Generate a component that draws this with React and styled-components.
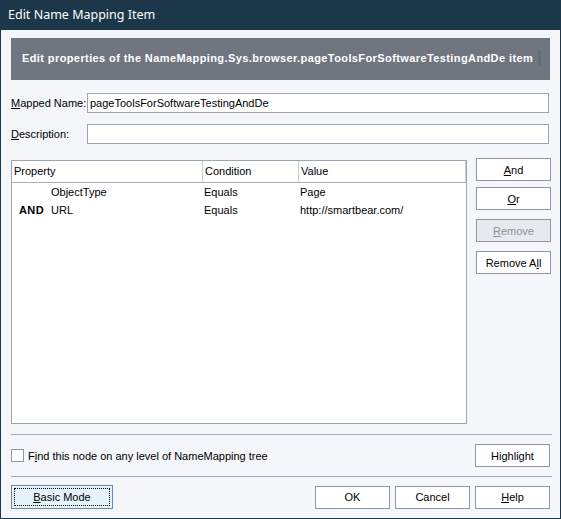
import React from 'react';
import styled, { createGlobalStyle } from 'styled-components';

const GlobalStyle = createGlobalStyle`
    html, body {
        margin: 0;
        padding: 0;
        background: #f4f6f9;
    }
    body {
        font-family: 'Liberation Sans', Arial, sans-serif;
        font-size: 11px;
        color: #000;
    }
`;

const rows = [
    { op: '', property: 'ObjectType', condition: 'Equals', value: 'Page' },
    { op: 'AND', property: 'URL', condition: 'Equals', value: 'http://smartbear.com/' },
];

const App = () => {
    return (
        <Window>
            <GlobalStyle />
            <TitleBar>Edit Name Mapping Item</TitleBar>
            <Body>
                <Banner>
                    <span>Edit properties of the NameMapping.Sys.browser.pageToolsForSoftwareTestingAndDe item</span>
                    <BannerNub />
                </Banner>

                <FieldRow>
                    <Label><u>M</u>apped Name:</Label>
                    <TextInput readOnly value="pageToolsForSoftwareTestingAndDe" />
                </FieldRow>
                <FieldRow gap={11}>
                    <Label><u>D</u>escription:</Label>
                    <TextInput readOnly value="" />
                </FieldRow>

                <MainArea>
                    <Grid>
                        <HeaderRow>
                            <HeadCell width={191}>Property</HeadCell>
                            <HeadCell width={96}>Condition</HeadCell>
                            <HeadCell grow>Value</HeadCell>
                        </HeaderRow>
                        <RowList>
                            {rows.map((r) => (
                                <DataRow key={r.property}>
                                    <OpCell>{r.op}</OpCell>
                                    <Cell width={153}>{r.property}</Cell>
                                    <Cell width={96}>{r.condition}</Cell>
                                    <Cell grow>{r.value}</Cell>
                                </DataRow>
                            ))}
                        </RowList>
                    </Grid>
                    <SideButtons>
                        <Button tight><u>A</u>nd</Button>
                        <Button><u>O</u>r</Button>
                        <Button disabled><u>R</u>emove</Button>
                        <Button>Remove A<u>l</u>l</Button>
                    </SideButtons>
                </MainArea>

                <Separator top={10} />

                <OptionRow>
                    <CheckLabel>
                        <CheckBox />
                        <span>F<u>i</u>nd this node on any level of NameMapping tree</span>
                    </CheckLabel>
                    <Button>Hi<u>g</u>hlight</Button>
                </OptionRow>

                <Separator top={9} />

                <FooterRow>
                    <ModeButton><FocusRing><u>B</u>asic Mode</FocusRing></ModeButton>
                    <FooterButtons>
                        <Button>OK</Button>
                        <Button>Cancel</Button>
                        <Button><u>H</u>elp</Button>
                    </FooterButtons>
                </FooterRow>
            </Body>
        </Window>
    );
};

export default App;

const Window = styled.div`
    width: 561px;
    height: 519px;
    box-sizing: border-box;
    border: 1px solid #1b3749;
    border-top: none;
    background: #f4f6f9;
    display: flex;
    flex-direction: column;
    overflow: hidden;
`;

const TitleBar = styled.div`
    height: 30px;
    flex: none;
    margin: 0 -1px;
    background: #1b3749;
    color: #fff;
    font-family: 'Noto Sans', 'Open Sans', sans-serif;
    font-size: 12.5px;
    line-height: 30px;
    padding-left: 8px;
`;

const Body = styled.div`
    padding: 8px 9px 0 10px;
    display: flex;
    flex-direction: column;
`;

const Banner = styled.div`
    height: 42px;
    width: 539px;
    box-sizing: border-box;
    background: #6f7680;
    color: #fff;
    font-weight: bold;
    font-size: 11px;
    letter-spacing: 0.4px;
    display: flex;
    align-items: center;
    justify-content: space-between;
    padding: 0 9px 2px 11px;
    white-space: nowrap;
`;

const BannerNub = styled.div`
    width: 3px;
    height: 14px;
    background: #656b75;
`;

const FieldRow = styled.div`
    display: flex;
    align-items: center;
    height: 20px;
    margin-top: ${(p) => p.gap || 13}px;
`;

const Label = styled.label`
    width: 76px;
    flex: none;
`;

const TextInput = styled.input`
    width: 462px;
    height: 20px;
    box-sizing: border-box;
    border: 1px solid #9aa5b5;
    background: #fff;
    font-family: inherit;
    font-size: 11px;
    padding: 0 2px;
    outline: none;
`;

const MainArea = styled.div`
    display: flex;
    align-items: flex-start;
    gap: 9px;
    margin-top: 14px;
`;

const Grid = styled.div`
    margin-top: 2px;
    width: 456px;
    height: 264px;
    box-sizing: border-box;
    border: 1px solid #9aa5b5;
    background: #fff;
`;

const HeaderRow = styled.div`
    display: flex;
    height: 22px;
    border: 1px solid #c7ccd3;
    border-top: none;
    border-left: none;
    box-sizing: border-box;
    border-bottom-color: #a8afb9;
`;

const HeadCell = styled.div`
    width: ${(p) => (p.width ? `${p.width}px` : 'auto')};
    flex: ${(p) => (p.grow ? 1 : 'none')};
    box-sizing: border-box;
    padding-left: 2px;
    line-height: 21px;
    border-right: ${(p) => (p.grow ? 'none' : '1px solid #c7ccd3')};
`;

const RowList = styled.div`
    display: flex;
    flex-direction: column;
`;

const DataRow = styled.div`
    display: flex;
    height: 18px;
    align-items: center;
`;

const OpCell = styled.div`
    width: 38px;
    flex: none;
    box-sizing: border-box;
    padding-left: 7px;
    font-weight: bold;
    font-size: 11px;
    letter-spacing: 0.4px;
`;

const Cell = styled.div`
    width: ${(p) => (p.width ? `${p.width}px` : 'auto')};
    flex: ${(p) => (p.grow ? 1 : 'none')};
    box-sizing: border-box;
    padding-left: 1px;
    white-space: nowrap;
`;

const SideButtons = styled.div`
    display: flex;
    flex-direction: column;
    gap: 9px;
`;

const Button = styled.button`
    width: 75px;
    height: 23px;
    box-sizing: border-box;
    border: 1px solid #8c98a9;
    background: ${(p) => (p.disabled ? '#e6e9ed' : '#fff')};
    color: ${(p) => (p.disabled ? '#8d939c' : '#000')};
    font-family: inherit;
    font-size: 11px;
    padding: 0;
    margin-bottom: ${(p) => (p.tight ? '-3px' : '0')};
    cursor: default;
`;

const Separator = styled.div`
    height: 1px;
    width: 541px;
    background: #a3abb6;
    margin-top: ${(p) => p.top}px;
`;

const OptionRow = styled.div`
    display: flex;
    align-items: center;
    justify-content: space-between;
    margin-top: 9px;
    width: 539px;
`;

const CheckLabel = styled.label`
    display: flex;
    align-items: center;
    gap: 4px;
`;

const CheckBox = styled.span`
    width: 13px;
    height: 13px;
    box-sizing: border-box;
    border: 1px solid #8c98a9;
    background: #fff;
`;

const FooterRow = styled.div`
    display: flex;
    align-items: center;
    justify-content: space-between;
    margin-top: 8px;
    width: 539px;
`;

const FooterButtons = styled.div`
    display: flex;
    gap: 5px;
`;

const ModeButton = styled.button`
    width: 102px;
    height: 24px;
    box-sizing: border-box;
    border: 1px solid #6d8aa8;
    background: #e5f4fc;
    padding: 2px;
    font-family: inherit;
    font-size: 11px;
    cursor: default;
`;

const FocusRing = styled.span`
    display: block;
    height: 100%;
    box-sizing: border-box;
    border: 1px dotted #000;
    line-height: 16px;
`;
